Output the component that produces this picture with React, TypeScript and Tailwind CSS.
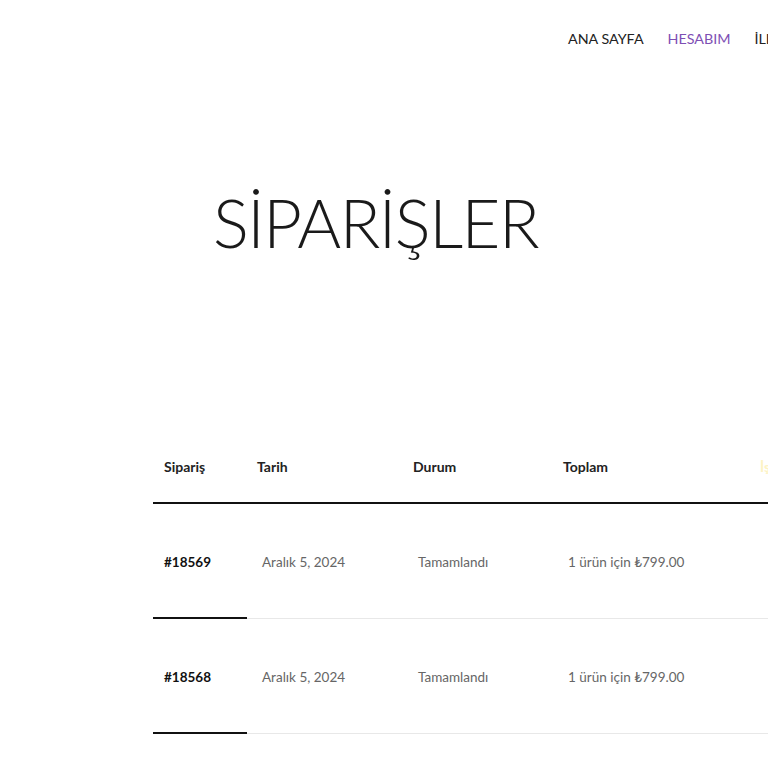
import React from 'react';

const orders = [
  { id: '#18569', date: 'Aralık 5, 2024', status: 'Tamamlandı', total: '1 ürün için ₺799.00' },
  { id: '#18568', date: 'Aralık 5, 2024', status: 'Tamamlandı', total: '1 ürün için ₺799.00' },
];

export default function App() {
  return (
    <div className="w-[768px] h-[768px] overflow-hidden bg-white font-['Lato','Open_Sans',sans-serif] text-[#222]">
      {/* Top navigation */}
      <nav className="h-[78px] flex items-center pl-[568px] gap-[24px] whitespace-nowrap text-[14.3px]">
        <span className="text-[#222]">ANA SAYFA</span>
        <span className="text-[#7e4fb4]">HESABIM</span>
        <span className="text-[#222]">İLETİŞİM</span>
      </nav>

      {/* Page title */}
      <div className="h-[299px] pl-[213px] pt-[99px]">
        <h1 className="text-[67px] leading-[90px] font-light tracking-[-1.5px] text-[#1a1a1a]">SİPARİŞLER</h1>
      </div>

      {/* Orders table */}
      <div className="ml-[153px] w-[800px]">
        <div className="flex h-[127px] items-end border-b-2 border-[#111]">
          <div className="flex w-full h-[72px] items-center pt-[1px] text-[14px] font-bold text-[#222]">
            <div className="w-[94px] pl-[11px]">Sipariş</div>
            <div className="w-[156px] pl-[10px]">Tarih</div>
            <div className="w-[150px] pl-[10px]">Durum</div>
            <div className="w-[197px] pl-[10px]">Toplam</div>
            <div className="pl-[10px] text-[#fdf3c4]">İşlemler</div>
          </div>
        </div>

        {orders.map((o) => (
          <div key={o.id} className="flex h-[115px] pt-[3px] items-center border-b border-[#e8e8e8] relative text-[13.5px]">
            <div className="w-[94px] pl-[11px] font-bold text-[#111]">{o.id}</div>
            <div className="w-[156px] pl-[15px] text-[#666]">{o.date}</div>
            <div className="w-[150px] pl-[15px] text-[#666]">{o.status}</div>
            <div className="w-[197px] pl-[15px] text-[#666]">{o.total}</div>
            <div className="absolute left-0 bottom-[-1px] w-[94px] h-[2px] bg-[#111]" />
          </div>
        ))}
      </div>
    </div>
  );
}
